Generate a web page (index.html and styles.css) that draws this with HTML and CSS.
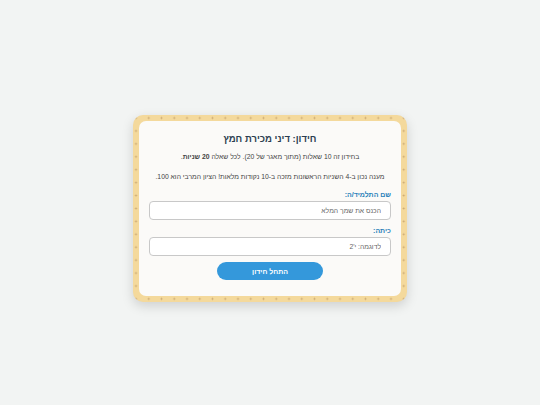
FILE: index.html
```html
<!DOCTYPE html>
<html lang="he" dir="rtl">
<head>
    <meta charset="UTF-8">
    <meta name="viewport" content="width=device-width, initial-scale=1.0">
    <title>חידון: דיני מכירת חמץ</title>
    <link rel="stylesheet" href="styles.css">
</head>
<body>
    <div class="matzah">
        <div class="quiz-card">
            <h1>חידון: דיני מכירת חמץ</h1>
            <p class="intro">בחידון זה 10 שאלות (מתוך מאגר של 20). לכל שאלה <strong>20 שניות</strong>.</p>
            <p class="intro">מענה נכון ב-4 השניות הראשונות מזכה ב-10 נקודות מלאות! הציון המרבי הוא 100.</p>

            <label for="student-name">שם התלמיד/ה:</label>
            <input type="text" id="student-name" placeholder="הכנס את שמך המלא">

            <label for="student-class">כיתה:</label>
            <input type="text" id="student-class" placeholder="לדוגמה: י'2">

            <button class="start-btn">התחל חידון</button>
        </div>
    </div>
</body>
</html>
```

FILE: styles.css
```css
body { font-family: "Liberation Sans", Arial, sans-serif; background-color: #f2f4f3; margin: 0; padding: 12px 0 0; height: 405px; box-sizing: border-box; display: flex; align-items: center; justify-content: center; }
/* matzah frame: baked crust with docking holes */
.matzah { width: 274px; padding: 6px; box-sizing: border-box; border-radius: 10px; background-color: #f4d99c; background-image: radial-gradient(circle, #c7a46f 0.7px, transparent 1.2px); background-size: 12.76px 12.93px; background-position: -3.38px -3.46px; box-shadow: 0 4px 12px rgba(0, 0, 0, 0.15); }
.quiz-card { background: #fbfaf8; border-radius: 7px; padding: 12px 10px 16px; text-align: center; }
h1 { font-size: 9.5px; line-height: 11px; color: #2c3e50; margin: 0 0 8px; }
.intro { font-size: 6.8px; line-height: 9px; color: #444; margin: 0 0 11px; }
.intro + .intro { margin-bottom: 9px; }
label { display: block; text-align: right; font-size: 7px; line-height: 9px; font-weight: bold; color: #2980b9; margin: 0 0 2px; }
input { display: block; width: 100%; box-sizing: border-box; height: 19px; margin: 0 0 6px; padding: 0 9px; font-family: inherit; font-size: 6.8px; border: 1px solid #c8c8c8; border-radius: 4px; background: #fff; }
input::placeholder { color: #666; }
.start-btn { display: block; margin: 6px auto 0; width: 106px; height: 18px; border: none; border-radius: 9px; background: #3498db; color: #fff; font-family: inherit; font-size: 7px; font-weight: bold; }
```
